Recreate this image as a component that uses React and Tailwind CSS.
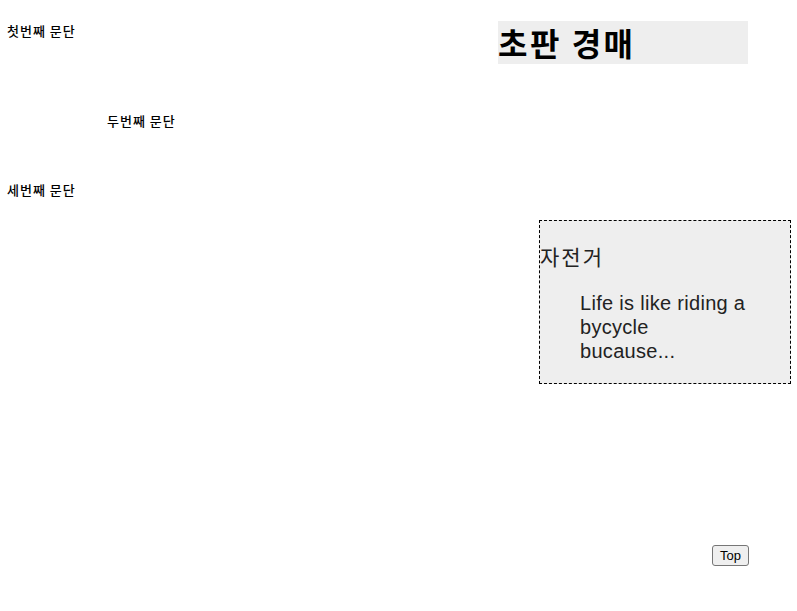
import React from 'react';

const ko = { fontFamily: '"Noto Sans CJK KR", "Noto Sans", sans-serif' };

const App = () => {
  return (
    <div className="w-[797px] h-[611px] bg-white text-black flex" style={ko}>
      <div className="w-[498px] pt-[21px] pl-[7px] flex flex-col items-start">
        <p className="text-[13px] leading-[19px] font-medium tracking-[1px]">첫번째 문단</p>
        <p className="text-[13px] leading-[19px] font-medium tracking-[1px] mt-[71px] ml-[100px]">두번째 문단</p>
        <p className="text-[13px] leading-[19px] font-medium tracking-[1px] mt-[50px]">세번째 문단</p>
      </div>

      <div className="w-[299px] flex flex-col items-start">
        <h1 className="mt-[21px] w-[250px] h-[43px] bg-[#eeeeee] text-[32px] font-bold leading-[43px] tracking-[2.5px] whitespace-nowrap">
          초판 경매
        </h1>

        <aside className="mt-[156px] ml-[41px] w-[252px] h-[164px] border border-dashed border-black bg-[#eeeeee] text-[#222222]">
          <h2 className="mt-[20px] text-[21px] leading-[30px] tracking-[2px]">자전거</h2>
          <p
            className="mt-[20px] pl-[40px] text-[20px] leading-[24px] tracking-[0.3px]"
            style={{ fontFamily: '"Liberation Sans", Arial, sans-serif' }}
          >
            Life is like riding a bycycle
            <br />
            bucause...
          </p>
        </aside>

        <button
          className="mt-[161px] ml-[214px] w-[37px] h-[21px] bg-[#efefef] border border-[#767676] rounded-[3px] text-[13px] leading-[19px] text-black"
          style={{ fontFamily: '"Liberation Sans", Arial, sans-serif' }}
        >
          Top
        </button>
      </div>
    </div>
  );
};

export default App;
